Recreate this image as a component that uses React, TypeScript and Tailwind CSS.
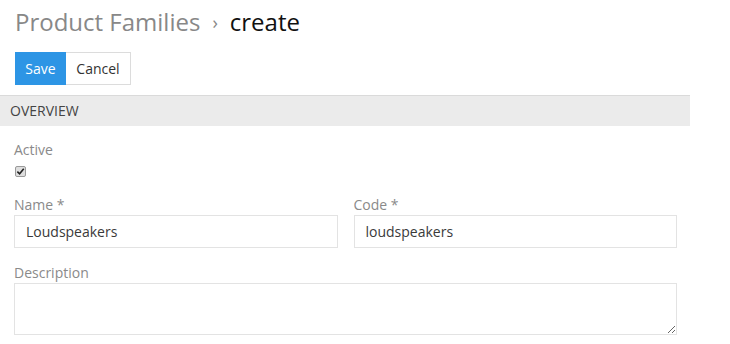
import { useState } from 'react';

const font = { fontFamily: '"Open Sans", "Noto Sans", Arial, sans-serif' };

function Field({ label, value, className = '' }: { label: string; value: string; className?: string }) {
  return (
    <div className={className}>
      <label className="block h-[17px] text-[14px] leading-[17px] text-[#8a8a8a]">{label}</label>
      <input
        defaultValue={value}
        className="mt-[2px] block h-[33px] w-full border border-[#e3e3e3] bg-white px-[11px] text-[14px] text-[#3a3a3a] outline-none"
      />
    </div>
  );
}

export default function App() {
  const [active, setActive] = useState(true);

  return (
    <div className="h-[344px] w-[730px] overflow-hidden bg-white" style={font}>
      <div className="px-[15px] pt-[6px]">
        <h1 className="flex items-center text-[24px] leading-[32px]">
          <span className="text-[#888]">Product Families</span>
          <span className="mx-[12px] text-[18px] text-[#888]">›</span>
          <span className="text-[#111]">create</span>
        </h1>
        <div className="mt-[14px] flex">
          <button className="h-[33px] w-[51px] bg-[#2d95e5] text-[14px] text-white">Save</button>
          <button className="h-[33px] w-[65px] border border-l-0 border-[#dcdcdc] bg-white text-[14px] text-[#333]">
            Cancel
          </button>
        </div>
      </div>

      <div className="mt-[10px] w-[690px] border-t border-[#dadada] bg-[#ebebeb] px-[10px] py-[6px] text-[14px] leading-[18px] text-[#444]">
        OVERVIEW
      </div>

      <div className="w-[677px] pl-[14px] pt-[15px]">
        <div className="text-[14px] leading-[18px] text-[#8a8a8a]">Active</div>
        <button
          type="button"
          onClick={() => setActive(!active)}
          className="mt-[7px] ml-[1px] flex h-[11px] w-[11px] items-center justify-center rounded-[2px] border border-[#9a9a9a] bg-[#dedede]"
        >
          {active && (
            <svg width="9" height="9" viewBox="0 0 10 10">
              <path d="M1.5 5.2 L4 7.6 L8.6 2" stroke="#222" strokeWidth="1.8" fill="none" />
            </svg>
          )}
        </button>

        <div className="mt-[19px] grid grid-cols-2 gap-x-[16px]">
          <Field label="Name *" value="Loudspeakers" />
          <Field label="Code *" value="loudspeakers" />
        </div>

        <div className="mt-[16px]">
          <label className="block h-[17px] text-[14px] leading-[17px] text-[#8a8a8a]">Description</label>
          <textarea className="mt-[2px] block h-[52px] w-full border border-[#e3e3e3] bg-white px-[12px] text-[14px] outline-none" />
        </div>
      </div>
    </div>
  );
}
